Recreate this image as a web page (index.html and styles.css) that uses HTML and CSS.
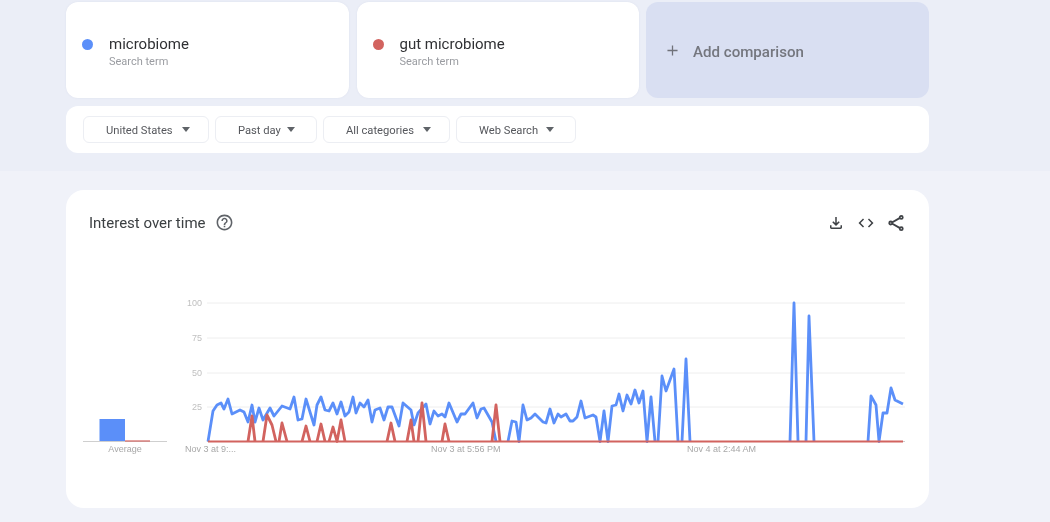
FILE: index.html
```html
<!DOCTYPE html>
<html>
  <head>
    <meta charset="UTF-8">
    <meta name="viewport" content="width=device-width, initial-scale=1.0">
    <title>Google Trends - Compare</title>
    <link rel="stylesheet" href="styles.css">
  </head>
  <body>
    <div class="page">
      <div class="top-section">
        <div class="terms">
          <div class="term-card">
            <span class="dot dot-blue"></span>
            <div>
              <div class="term-name">microbiome</div>
              <div class="term-type">Search term</div>
            </div>
          </div>
          <div class="term-card">
            <span class="dot dot-red"></span>
            <div>
              <div class="term-name">gut microbiome</div>
              <div class="term-type">Search term</div>
            </div>
          </div>
          <div class="add-card">
            <svg class="plus-icon" viewBox="0 0 12 12"><path d="M6 0.5v11M0.5 6h11"/></svg>
            <span>Add comparison</span>
          </div>
        </div>

        <div class="filters">
          <div class="filter filter-country">United States<span class="caret"></span></div>
          <div class="filter filter-time">Past day<span class="caret"></span></div>
          <div class="filter filter-category">All categories<span class="caret"></span></div>
          <div class="filter filter-type">Web Search<span class="caret"></span></div>
        </div>
      </div>

      <div class="bottom-section">
        <div class="chart-card">
          <div class="chart-header">
            <h2>Interest over time</h2>
            <svg class="help-icon" viewBox="0 0 24 24"><path d="M11 18h2v-2h-2v2zm1-16C6.48 2 2 6.48 2 12s4.48 10 10 10 10-4.48 10-10S17.52 2 12 2zm0 18c-4.41 0-8-3.59-8-8s3.59-8 8-8 8 3.59 8 8-3.59 8-8 8zm0-14c-2.21 0-4 1.79-4 4h2c0-1.1.9-2 2-2s2 .9 2 2c0 2-3 1.75-3 5h2c0-2.25 3-2.5 3-5 0-2.21-1.79-4-4-4z"/></svg>
            <div class="chart-actions">
              <svg viewBox="0 0 24 24"><path d="M12 16l-5-5 1.4-1.45 2.6 2.6V4h2v8.15l2.6-2.6L17 11l-5 5zM6 20c-.55 0-1.02-.2-1.41-.59C4.2 19.02 4 18.55 4 18v-3h2v3h12v-3h2v3c0 .55-.2 1.02-.59 1.41-.39.39-.86.59-1.41.59H6z"/></svg>
              <svg viewBox="0 0 24 24"><path d="M9.4 16.6L4.8 12l4.6-4.6L8 6l-6 6 6 6 1.4-1.4zm5.2 0l4.6-4.6-4.6-4.6L16 6l6 6-6 6-1.4-1.4z"/></svg>
              <svg viewBox="0 0 24 24"><g class="share-lines"><path d="M18.5 4.5L5.5 12l13 7.5"/><circle cx="19" cy="4.5" r="2"/><circle cx="5" cy="12" r="2"/><circle cx="19" cy="19.5" r="2"/></g></svg>
            </div>
          </div>

          <!-- viewBox uses page coordinates so the traced points stay readable -->
          <svg class="chart" viewBox="66 285 863 180">
            <g class="grid">
              <path d="M207 303H905M207 338H905M207 373H905M207 407H905"/>
            </g>
            <g class="y-labels">
              <text x="202" y="306">100</text>
              <text x="202" y="341">75</text>
              <text x="202" y="376">50</text>
              <text x="202" y="410">25</text>
            </g>
            <path class="baseline" d="M83 441.5H167M207 441.5H905"/>

            <rect class="avg-blue" x="99.5" y="419" width="25.5" height="22"/>
            <path class="avg-red" d="M125 441H150"/>

            <!-- blue runs stop at zero so the flat parts don't tint the red baseline -->
            <path class="line-blue" d="M208 441.5L213 411 217 405 221 403 224 409 228 399 232 414 240 410 244 412 248 422 252 405 255 422 259 408 263 420 270 408 274 416 282 406 290 409 294 397 298 420 302 419 306 399 314 425 317 405 321 397 325 410 329 411 333 403 337 414 341 402 345 416 349 412 353 397 356 413 360 403 364 407 368 400 372 422 375 410 380 408 384 420 388 407 392 407 399 426 403 403 411 410 414 425 418 413 426 404 430 424 434 411 438 416 442 414 445 417 449 403 457 422 461 414 465 414 473 403 477 418 481 409 484 408 492 422 496 441.5M508 441.5L512 421 516 422 519 441.5 523 405 527 420 531 418 535 414 543 422 546 423 550 409 554 423 558 414 561 417 566 414 570 421 573 421 577 417 581 401 585 418 593 415 596 417 600 441.5 604 411 608 441.5 612 406 616 405 619 394 623 411 627 395 631 404 635 390 639 403 643 391 647 441.5 651 397 655 441.5M658 441.5L662 376 666 391 674 369 678 441.5M682 441.5L686 359 690 441.5M790 441.5L794 303 798 441.5M806 441.5L809 316 814 441.5M868 441.5L871 396 876 405 879 441.5 883 413 887 413 891 388 895 400 903 404"/>
            <path class="line-red" d="M248 441.5L252 416 255 441.5M263 441.5L267 415 272 425 276 441.5M279 441.5L282 423 287 441.5M302 441.5L306 426 310 441.5M317 441.5L321 424 325 441.5M329 441.5L333 427 337 441.5L341 420 345 441.5M387 441.5L391 423 395 441.5M407 441.5L411 420 414 441.5M418 441.5L422 403 426 441.5M442 441.5L445 424 449 441.5M492 441.5L496 405 500 441.5"/>
            <path class="line-red-base" d="M208 441.5H903"/>

            <g class="x-labels">
              <text class="avg-label" x="125" y="452">Average</text>
              <text x="185" y="452">Nov 3 at 9:...</text>
              <text x="431" y="452">Nov 3 at 5:56 PM</text>
              <text x="687" y="452">Nov 4 at 2:44 AM</text>
            </g>
          </svg>
        </div>
      </div>
    </div>
  </body>
</html>
```

FILE: styles.css
```css
* {
  margin: 0;
  padding: 0;
  box-sizing: border-box;
}

body {
  font-family: Roboto, 'Liberation Sans', sans-serif;
  background: #f0f2f9;
  color: #3c4043;
  height: 522px;
  overflow: hidden;
}

/* the source capture is a soft upscale */
.page {
  height: 522px;
  background: #f0f2f9;
  filter: blur(0.4px);
}

.top-section {
  background: #ebeef7;
  height: 171px;
  padding: 2px 121px 0 66px;
}

.terms {
  display: grid;
  grid-template-columns: 283px 282px 283px;
  gap: 7.5px;
}

.term-card {
  height: 96px;
  background: white;
  border-radius: 12px;
  box-shadow: 0 0 2px rgba(120, 130, 170, 0.12);
  display: flex;
  align-items: center;
  gap: 16px;
  padding: 3px 16px 0;
}

.dot {
  width: 11px;
  height: 11px;
  border-radius: 50%;
  margin-top: -14px;
  flex-shrink: 0;
}

.dot-blue {
  background: #5b8ff9;
}

.dot-red {
  background: #d2635f;
}

.term-name {
  font-size: 15px;
  line-height: 18px;
  color: #303134;
}

.term-type {
  font-size: 11px;
  line-height: 14px;
  margin-top: 2px;
  color: #9a9ca1;
}

.add-card {
  height: 96px;
  background: #d9dff2;
  border-radius: 12px;
  display: flex;
  align-items: center;
  gap: 15px;
  padding: 4px 0 0 21px;
  font-size: 15.1px;
  font-weight: 500;
  color: #74767e;
}

.plus-icon {
  width: 11px;
  height: 11px;
  margin-top: -3px;
  fill: none;
  stroke: #70727a;
  stroke-width: 1.4;
}

.filters {
  margin-top: 8px;
  height: 47px;
  background: white;
  border-radius: 12px;
  display: flex;
  align-items: center;
  gap: 6px;
  padding-left: 17px;
}

.filter {
  height: 27px;
  border: 1px solid #eceef3;
  border-radius: 6px;
  display: flex;
  align-items: center;
  justify-content: space-between;
  padding: 2px 19px 0 22px;
  font-size: 11.2px;
  color: #55575c;
}

.filter-country {
  width: 126px;
  padding-right: 18px;
}

.filter-time {
  width: 102px;
  padding-right: 21px;
}

.filter-category {
  width: 127px;
  padding-right: 18px;
}

.filter-type {
  width: 120px;
  padding-right: 21px;
}

.caret {
  width: 0;
  height: 0;
  margin-top: -2px;
  border-left: 4px solid transparent;
  border-right: 4px solid transparent;
  border-top: 5px solid #5f6368;
}

.bottom-section {
  padding: 19px 121px 0 66px;
}

.chart-card {
  height: 318px;
  background: white;
  border-radius: 18px;
}

.chart-header {
  height: 95px;
  display: flex;
  align-items: flex-start;
  padding: 24px 24px 0 23px;
}

.chart-header h2 {
  font-size: 15px;
  line-height: 18px;
  font-weight: 400;
  color: #3c4043;
}

.help-icon {
  width: 19px;
  height: 19px;
  margin: -1px 0 0 9px;
  fill: #5f6368;
}

.chart-actions {
  margin-left: auto;
  display: flex;
  gap: 12px;
}

.chart-actions svg {
  width: 18px;
  height: 18px;
  fill: #3f4246;
}

.share-lines {
  fill: white;
  stroke: #3f4246;
  stroke-width: 2.4;
}

.chart {
  display: block;
  width: 863px;
  height: 180px;
}

.grid path {
  fill: none;
  stroke: #eeeeee;
  stroke-width: 1;
}

.baseline {
  fill: none;
  stroke: #cfcfcf;
  stroke-width: 1;
}

.y-labels text,
.x-labels text {
  font-family: 'Liberation Sans', Arial, sans-serif;
  font-size: 9px;
  fill: #a8a8a8;
}

.y-labels text {
  text-anchor: end;
  fill: #c0c0c0;
}

.avg-label {
  text-anchor: middle;
}

.avg-blue {
  fill: #5b8ff9;
}

.avg-red {
  fill: none;
  stroke: #d2635f;
  stroke-width: 1.2;
}

.line-blue,
.line-red {
  fill: none;
  stroke-width: 2.8;
  stroke-linejoin: round;
}

.line-blue {
  stroke: #5b8ff9;
}

.line-red {
  stroke: #d2635f;
}

.line-red-base {
  fill: none;
  stroke: #d2635f;
  stroke-width: 2;
}
```
